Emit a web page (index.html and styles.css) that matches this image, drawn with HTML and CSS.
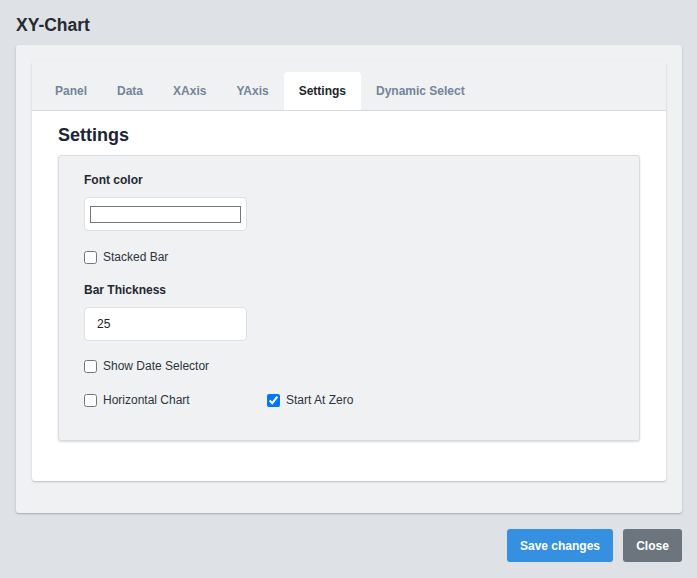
FILE: index.html
```html
<!DOCTYPE html>
<html>
<head>
<meta charset="utf-8">
<link rel="stylesheet" href="styles.css">
</head>
<body>
<div class="modal">
  <h1 class="modal-title">XY-Chart</h1>
  <div class="outer">
    <div class="card">
      <div class="tabs">
        <div class="tab">Panel</div>
        <div class="tab">Data</div>
        <div class="tab">XAxis</div>
        <div class="tab">YAxis</div>
        <div class="tab active">Settings</div>
        <div class="tab">Dynamic Select</div>
      </div>
      <div class="card-body">
        <h2 class="section-title">Settings</h2>
        <div class="box">
          <div class="field-label">Font color</div>
          <div class="color-input"><span class="swatch"></span></div>
          <label class="check row-stacked"><input type="checkbox"><span>Stacked Bar</span></label>
          <div class="field-label label-thick">Bar Thickness</div>
          <div class="text-input">25</div>
          <label class="check row-date"><input type="checkbox"><span>Show Date Selector</span></label>
          <div class="check-pair">
            <label class="check"><input type="checkbox"><span>Horizontal Chart</span></label>
            <label class="check"><input type="checkbox" checked><span>Start At Zero</span></label>
          </div>
        </div>
      </div>
    </div>
  </div>
  <div class="footer">
    <button class="btn btn-primary">Save changes</button>
    <button class="btn btn-secondary">Close</button>
  </div>
</div>
</body>
</html>
```

FILE: styles.css
```css
html, body {
  margin: 0;
  padding: 0;
}
body {
  background: #dee1e6;
  font-family: "Liberation Sans", Arial, sans-serif;
  color: #2d3748;
  width: 697px;
  height: 578px;
  overflow: hidden;
}
.modal {
  padding: 14px 15px 0 16px;
}
.modal-title {
  margin: 0;
  font-size: 17.5px;
  line-height: 22px;
  font-weight: bold;
  color: #262a2f;
}
.outer {
  margin-top: 9px;
  background: #f0f1f3;
  border-radius: 3px;
  box-shadow: 0 1px 2px rgba(0,0,0,0.25);
  padding: 16px 16px 32px 16px;
  height: 420px;
}
.card {
  background: #ffffff;
  border-radius: 3px;
  box-shadow: 0 1px 2px rgba(0,0,0,0.22);
  height: 420px;
  overflow: hidden;
}
.tabs {
  display: flex;
  background: #f0f1f3;
  border-bottom: 1px solid #d6d9dd;
  padding: 11px 0 0 8px;
  height: 38px;
}
.tab {
  padding: 0 15px;
  height: 38px;
  line-height: 38px;
  font-size: 12px;
  font-weight: bold;
  color: #74849a;
  border-radius: 4px 4px 0 0;
  white-space: nowrap;
}
.tab.active {
  background: #ffffff;
  color: #22262b;
}
.card-body {
  padding: 0 26px;
}
.section-title {
  margin: 13px 0 0 0;
  font-size: 18px;
  line-height: 22px;
  font-weight: bold;
  color: #1c2533;
}
.box {
  margin-top: 9px;
  background: #f0f1f3;
  border: 1px solid #d9dcdf;
  border-radius: 3px;
  box-shadow: 0 1px 2px rgba(0,0,0,0.15);
  padding: 16px 25px 0 25px;
  height: 268px;
}
.field-label {
  font-size: 12px;
  line-height: 16px;
  font-weight: bold;
  color: #222831;
}
.color-input {
  margin-top: 9px;
  width: 161px;
  height: 32px;
  background: #fff;
  border: 1px solid #dcdfe3;
  border-radius: 4px;
  display: flex;
  align-items: center;
  justify-content: center;
}
.swatch {
  display: block;
  width: 149px;
  height: 15px;
  border: 1px solid #767676;
  background: #ffffff;
}
.check {
  display: flex;
  align-items: center;
  font-size: 12px;
  line-height: 16px;
  color: #2d3440;
  height: 16px;
}
.check input {
  margin: 0 6px 0 0;
  width: 13px;
  height: 13px;
}
.row-stacked {
  margin-top: 18px;
}
.label-thick {
  margin-top: 17px;
}
.text-input {
  margin-top: 9px;
  width: 149px;
  height: 32px;
  line-height: 32px;
  padding-left: 12px;
  background: #fff;
  border: 1px solid #dcdfe3;
  border-radius: 4px;
  font-size: 12px;
  color: #222;
}
.row-date {
  margin-top: 17px;
}
.check-pair {
  margin-top: 18px;
  display: grid;
  grid-template-columns: 183px auto;
}
.footer {
  display: flex;
  justify-content: flex-end;
  gap: 10px;
  margin-top: 16px;
}
.btn {
  border: none;
  border-radius: 3px;
  height: 33px;
  font-family: "Liberation Sans", Arial, sans-serif;
  font-size: 12px;
  font-weight: bold;
  color: #ffffff;
  padding: 0;
  white-space: nowrap;
  cursor: pointer;
}
.btn-primary {
  background: #3590e2;
  width: 106px;
}
.btn-secondary {
  background: #6c757d;
  width: 59px;
}
```
